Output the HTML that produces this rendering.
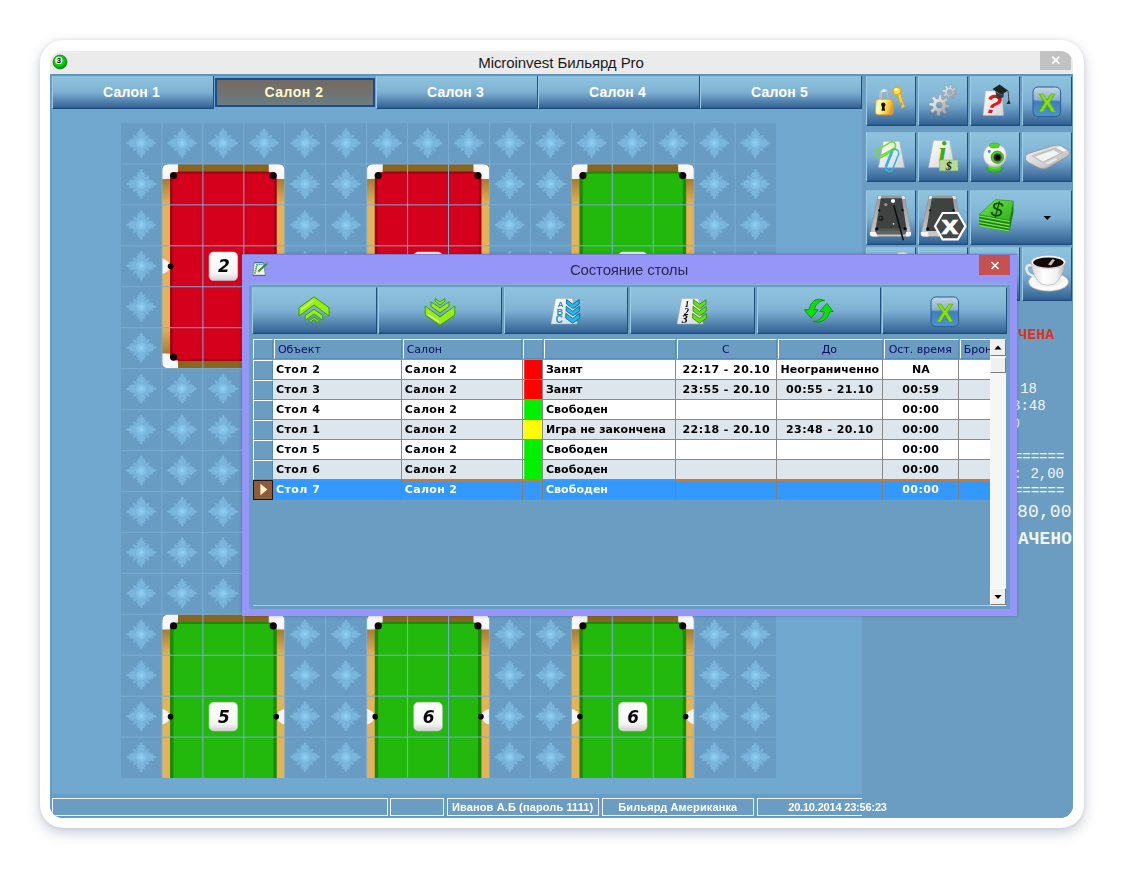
<!DOCTYPE html>
<html lang="ru"><head><meta charset="utf-8"><title>Microinvest Бильярд Pro</title>
<style>
*{box-sizing:border-box;margin:0;padding:0}
html,body{width:1124px;height:869px;background:#fff;overflow:hidden}
body{position:relative;font-family:"Liberation Sans",sans-serif}
#card{position:absolute;left:40px;top:40px;width:1044px;height:788px;background:#fff;border-radius:23px;box-shadow:0 5px 13px rgba(50,70,110,.27),0 0 4px rgba(50,70,110,.11)}
#shot{position:absolute;left:50px;top:51px;width:1023px;height:767px;border-radius:13px;overflow:hidden;background:linear-gradient(to bottom,#ebebeb 0,#ebebeb 23px,#70a8cf 23px)}
#in{position:absolute;left:-50px;top:-51px;width:1124px;height:869px}
.abs{position:absolute}
#tbar{left:50px;top:51px;width:1024px;height:23.2px;background:#ebebeb}
#title{left:361px;width:400px;top:53.5px;height:18px;text-align:center;font-size:15px;line-height:18px;color:#1a1a1a;letter-spacing:-0.07px}
#wclose{left:1040px;top:51px;width:31px;height:19px;background:#c2c2c2}
#strip{left:50px;top:74px;width:1024px;height:2.2px;background:#5d95bd}
#rpanel{left:862px;top:76px;width:212px;height:745px;background:#6a9dc1}
#ledge{left:50px;top:74px;width:2px;height:745px;background:#659dc6}
.tab{top:76px;height:33px;background:linear-gradient(to bottom,#8ec3de 0%,#86bad8 30%,#7db0d2 50%,#6c9fc6 62%,#5787b3 76%,#44749f 88%,#38689a 96%,#2a5a8c 100%);border-left:1px solid #9ccce6;border-right:1px solid #1f4f80;border-bottom:1.3px solid #1c4a7a;color:#fff;font-weight:bold;font-size:14px;text-align:center;line-height:33.2px;letter-spacing:.25px;padding-right:3px}
.tab.sel{background:linear-gradient(to bottom,#776a60 0%,#6f7474 60%,#6a7e82 100%);border:2px solid #1d4c8e;border-top-width:2px;color:#fff9cc;line-height:25.4px;padding-right:2px;letter-spacing:.5px}
.btn{background:linear-gradient(to bottom,#8ec3de 0%,#86bad8 30%,#7db0d2 50%,#6c9fc6 62%,#5787b3 76%,#44749f 88%,#38689a 96%,#2a5a8c 100%);border-left:1px solid #9ccce6;border-right:1.3px solid #1f4f80;border-bottom:1.5px solid #1c4a7a;border-top:1px solid #8abedb}
.btn svg{position:absolute;left:0;top:0;overflow:visible}
#sbar{left:50px;top:794px;width:812px;height:25px;background:#659dc6}
.sp{top:797.9px;height:18px;border:1.3px solid #f4f6f8;border-right-color:#e9eef3;background:#6a9dc1;color:#fff;font-weight:bold;font-size:11px;line-height:16.6px;text-align:center;white-space:nowrap;overflow:visible;letter-spacing:.12px}
.rc{font-family:"Liberation Mono",monospace;color:#f2f6fa;white-space:pre;text-align:right;right:60px}
#dlg{left:242.3px;top:254.4px;width:774.3px;height:361.2px;background:#9696f8;box-shadow:0 0 3px rgba(40,40,90,.35);border-top:1px solid #7c7cd0}
#dcont{left:249px;top:284.3px;width:760.5px;height:324.3px;background:#6b9dc2;border-top:1px solid #84b4d4}
#dtitle{left:429px;width:400px;top:259.6px;height:20px;text-align:center;font-size:15px;line-height:20px;color:#2a2a4c;letter-spacing:-0.18px}
#dclose{left:979px;top:255.2px;width:31px;height:19.6px;background:#c75050}
#gridbox{left:253px;top:339px;width:752.7px;height:266.5px;background:#6b9dc2;overflow:hidden;border-bottom:1px solid #a6d0e6}
.hc{position:absolute;top:0;height:20.4px;background:#6b9dc2;border-left:1.4px solid #fff;border-top:1.4px solid #fff;border-right:1px solid #5a8cb2;border-bottom:1px solid #5a8cb2;font-family:"DejaVu Sans","Liberation Sans",sans-serif;font-size:11px;line-height:19.6px;color:#0c0c64;white-space:nowrap;overflow:hidden;padding-left:3.2px;letter-spacing:0px}
.hc.c{text-align:center;padding-left:0;padding-right:2px}
.row{position:absolute;left:0;width:737px;height:20px}
.cell{position:absolute;top:0;height:20px;border-right:1px solid #8a8a8a;border-bottom:1px solid #8a8a8a;font-family:"DejaVu Sans","Liberation Sans",sans-serif;font-weight:bold;font-size:11px;line-height:20.2px;color:#000;white-space:nowrap;overflow:hidden;padding-left:2.6px;letter-spacing:0px}
.cell.c{text-align:center;padding-left:0}
.rh{position:absolute;top:0;left:0;width:20.4px;height:20px;background:#6b9dc2;border-left:1.4px solid #fff;border-top:1.4px solid #fff;border-right:1px solid #5a8cb2;border-bottom:1px solid #5a8cb2}
</style></head>
<body>
<div id="card"></div>
<div id="shot"><div id="in">
<div class="abs" id="rpanel"></div>
<div class="abs" id="strip"></div>
<div class="abs" id="ledge"></div>
<div class="abs" id="tbar"></div>
<svg class="abs" style="left:51.5px;top:53.5px" width="16" height="16" viewBox="0 0 16 16"><defs><radialGradient id="ball" cx="0.42" cy="0.38" r="0.62"><stop offset="0" stop-color="#30f030"/><stop offset="0.55" stop-color="#10d410"/><stop offset="1" stop-color="#069006"/></radialGradient></defs>
<circle cx="8" cy="8" r="7" fill="url(#ball)" stroke="#0a5a0a" stroke-width="0.6"/><circle cx="6.8" cy="6.4" r="3.6" fill="#f4fff4"/>
<text x="6.9" y="9.2" text-anchor="middle" font-family="Liberation Sans,sans-serif" font-weight="bold" font-size="7.6" fill="#000">3</text></svg>
<div class="abs" id="title">Microinvest Бильярд Pro</div>
<div class="abs" id="wclose"><svg width="31" height="19" viewBox="0 0 31 19"><path d="M12.3,5.6 L19.3,12.6 M19.3,5.6 L12.3,12.6" stroke="#fff" stroke-width="1.6"/></svg></div>
<div class="abs tab" style="left:52px;width:162px">Салон 1</div>
<div class="abs tab sel" style="left:214.6px;width:160.8px;top:77.6px;height:29.6px">Салон 2</div>
<div class="abs tab" style="left:376px;width:162px">Салон 3</div>
<div class="abs tab" style="left:538px;width:162px">Салон 4</div>
<div class="abs tab" style="left:700px;width:162px">Салон 5</div>
<svg id="grid" style="position:absolute;left:121.1px;top:123.1px" width="655.04" height="655.04" viewBox="0 0 655.04 655.04">
<defs>
<radialGradient id="sfc"><stop offset="0" stop-color="#9ad8f8"/><stop offset="0.6" stop-color="#86c4ea"/><stop offset="1" stop-color="#80bce2"/></radialGradient>
<filter id="sblur" x="0" y="0" width="100%" height="100%" filterUnits="userSpaceOnUse"><feGaussianBlur stdDeviation="0.45"/></filter>
<g id="sf">
<path id="arm" d="M0,-15.4 L1.5,-13.5 L1.5,-11.5 L3.8,-12.3 L3.2,-9.6 L5.2,-9.4 L3,-6 L-3,-6 L-5.2,-9.4 L-3.2,-9.6 L-3.8,-12.3 L-1.5,-11.5 L-1.5,-13.5 Z" fill="#7fbbe2" opacity="0.8"/>
<use href="#arm" transform="rotate(90)"/><use href="#arm" transform="rotate(180)"/><use href="#arm" transform="rotate(270)"/>
<path d="M0,-9.6 L3,-6.6 L8.6,-8.6 L6.6,-3 L9.6,0 L6.6,3 L8.6,8.6 L3,6.6 L0,9.6 L-3,6.6 L-8.6,8.6 L-6.6,3 L-9.6,0 L-6.6,-3 L-8.6,-8.6 L-3,-6.6 Z" fill="#7cb7df" opacity="0.8"/>
<circle r="5.4" fill="url(#sfc)" opacity="0.85"/>
</g>
<linearGradient id="woodS" x1="0" y1="0" x2="0" y2="1"><stop offset="0" stop-color="#8a6520"/><stop offset="0.07" stop-color="#a57a30"/><stop offset="0.2" stop-color="#e6b257"/><stop offset="0.8" stop-color="#e6b257"/><stop offset="0.93" stop-color="#a57a30"/><stop offset="1" stop-color="#8a6520"/></linearGradient>
<linearGradient id="pk" x1="0" y1="0" x2="1" y2="1"><stop offset="0" stop-color="#ffffff"/><stop offset="0.6" stop-color="#f4f4f4"/><stop offset="1" stop-color="#b8b8b8"/></linearGradient>
<linearGradient id="lbl" x1="0" y1="0" x2="0" y2="1"><stop offset="0" stop-color="#ffffff"/><stop offset="0.75" stop-color="#f6f6f6"/><stop offset="1" stop-color="#d0d0d0"/></linearGradient>

</defs>
<rect width="655.04" height="655.04" fill="#689cc2"/>
<g filter="url(#sblur)">
<use href="#sf" x="20.20" y="20.00"/>
<use href="#sf" x="61.14" y="20.00"/>
<use href="#sf" x="102.08" y="20.00"/>
<use href="#sf" x="143.02" y="20.00"/>
<use href="#sf" x="183.96" y="20.00"/>
<use href="#sf" x="224.90" y="20.00"/>
<use href="#sf" x="265.84" y="20.00"/>
<use href="#sf" x="306.78" y="20.00"/>
<use href="#sf" x="347.72" y="20.00"/>
<use href="#sf" x="388.66" y="20.00"/>
<use href="#sf" x="429.60" y="20.00"/>
<use href="#sf" x="470.54" y="20.00"/>
<use href="#sf" x="511.48" y="20.00"/>
<use href="#sf" x="552.42" y="20.00"/>
<use href="#sf" x="593.36" y="20.00"/>
<use href="#sf" x="634.30" y="20.00"/>
<use href="#sf" x="20.20" y="60.94"/>
<use href="#sf" x="61.14" y="60.94"/>
<use href="#sf" x="102.08" y="60.94"/>
<use href="#sf" x="143.02" y="60.94"/>
<use href="#sf" x="183.96" y="60.94"/>
<use href="#sf" x="224.90" y="60.94"/>
<use href="#sf" x="265.84" y="60.94"/>
<use href="#sf" x="306.78" y="60.94"/>
<use href="#sf" x="347.72" y="60.94"/>
<use href="#sf" x="388.66" y="60.94"/>
<use href="#sf" x="429.60" y="60.94"/>
<use href="#sf" x="470.54" y="60.94"/>
<use href="#sf" x="511.48" y="60.94"/>
<use href="#sf" x="552.42" y="60.94"/>
<use href="#sf" x="593.36" y="60.94"/>
<use href="#sf" x="634.30" y="60.94"/>
<use href="#sf" x="20.20" y="101.88"/>
<use href="#sf" x="61.14" y="101.88"/>
<use href="#sf" x="102.08" y="101.88"/>
<use href="#sf" x="143.02" y="101.88"/>
<use href="#sf" x="183.96" y="101.88"/>
<use href="#sf" x="224.90" y="101.88"/>
<use href="#sf" x="265.84" y="101.88"/>
<use href="#sf" x="306.78" y="101.88"/>
<use href="#sf" x="347.72" y="101.88"/>
<use href="#sf" x="388.66" y="101.88"/>
<use href="#sf" x="429.60" y="101.88"/>
<use href="#sf" x="470.54" y="101.88"/>
<use href="#sf" x="511.48" y="101.88"/>
<use href="#sf" x="552.42" y="101.88"/>
<use href="#sf" x="593.36" y="101.88"/>
<use href="#sf" x="634.30" y="101.88"/>
<use href="#sf" x="20.20" y="142.82"/>
<use href="#sf" x="61.14" y="142.82"/>
<use href="#sf" x="102.08" y="142.82"/>
<use href="#sf" x="143.02" y="142.82"/>
<use href="#sf" x="183.96" y="142.82"/>
<use href="#sf" x="224.90" y="142.82"/>
<use href="#sf" x="265.84" y="142.82"/>
<use href="#sf" x="306.78" y="142.82"/>
<use href="#sf" x="347.72" y="142.82"/>
<use href="#sf" x="388.66" y="142.82"/>
<use href="#sf" x="429.60" y="142.82"/>
<use href="#sf" x="470.54" y="142.82"/>
<use href="#sf" x="511.48" y="142.82"/>
<use href="#sf" x="552.42" y="142.82"/>
<use href="#sf" x="593.36" y="142.82"/>
<use href="#sf" x="634.30" y="142.82"/>
<use href="#sf" x="20.20" y="183.76"/>
<use href="#sf" x="61.14" y="183.76"/>
<use href="#sf" x="102.08" y="183.76"/>
<use href="#sf" x="143.02" y="183.76"/>
<use href="#sf" x="183.96" y="183.76"/>
<use href="#sf" x="224.90" y="183.76"/>
<use href="#sf" x="265.84" y="183.76"/>
<use href="#sf" x="306.78" y="183.76"/>
<use href="#sf" x="347.72" y="183.76"/>
<use href="#sf" x="388.66" y="183.76"/>
<use href="#sf" x="429.60" y="183.76"/>
<use href="#sf" x="470.54" y="183.76"/>
<use href="#sf" x="511.48" y="183.76"/>
<use href="#sf" x="552.42" y="183.76"/>
<use href="#sf" x="593.36" y="183.76"/>
<use href="#sf" x="634.30" y="183.76"/>
<use href="#sf" x="20.20" y="224.70"/>
<use href="#sf" x="61.14" y="224.70"/>
<use href="#sf" x="102.08" y="224.70"/>
<use href="#sf" x="143.02" y="224.70"/>
<use href="#sf" x="183.96" y="224.70"/>
<use href="#sf" x="224.90" y="224.70"/>
<use href="#sf" x="265.84" y="224.70"/>
<use href="#sf" x="306.78" y="224.70"/>
<use href="#sf" x="347.72" y="224.70"/>
<use href="#sf" x="388.66" y="224.70"/>
<use href="#sf" x="429.60" y="224.70"/>
<use href="#sf" x="470.54" y="224.70"/>
<use href="#sf" x="511.48" y="224.70"/>
<use href="#sf" x="552.42" y="224.70"/>
<use href="#sf" x="593.36" y="224.70"/>
<use href="#sf" x="634.30" y="224.70"/>
<use href="#sf" x="20.20" y="265.64"/>
<use href="#sf" x="61.14" y="265.64"/>
<use href="#sf" x="102.08" y="265.64"/>
<use href="#sf" x="143.02" y="265.64"/>
<use href="#sf" x="183.96" y="265.64"/>
<use href="#sf" x="224.90" y="265.64"/>
<use href="#sf" x="265.84" y="265.64"/>
<use href="#sf" x="306.78" y="265.64"/>
<use href="#sf" x="347.72" y="265.64"/>
<use href="#sf" x="388.66" y="265.64"/>
<use href="#sf" x="429.60" y="265.64"/>
<use href="#sf" x="470.54" y="265.64"/>
<use href="#sf" x="511.48" y="265.64"/>
<use href="#sf" x="552.42" y="265.64"/>
<use href="#sf" x="593.36" y="265.64"/>
<use href="#sf" x="634.30" y="265.64"/>
<use href="#sf" x="20.20" y="306.58"/>
<use href="#sf" x="61.14" y="306.58"/>
<use href="#sf" x="102.08" y="306.58"/>
<use href="#sf" x="143.02" y="306.58"/>
<use href="#sf" x="183.96" y="306.58"/>
<use href="#sf" x="224.90" y="306.58"/>
<use href="#sf" x="265.84" y="306.58"/>
<use href="#sf" x="306.78" y="306.58"/>
<use href="#sf" x="347.72" y="306.58"/>
<use href="#sf" x="388.66" y="306.58"/>
<use href="#sf" x="429.60" y="306.58"/>
<use href="#sf" x="470.54" y="306.58"/>
<use href="#sf" x="511.48" y="306.58"/>
<use href="#sf" x="552.42" y="306.58"/>
<use href="#sf" x="593.36" y="306.58"/>
<use href="#sf" x="634.30" y="306.58"/>
<use href="#sf" x="20.20" y="347.52"/>
<use href="#sf" x="61.14" y="347.52"/>
<use href="#sf" x="102.08" y="347.52"/>
<use href="#sf" x="143.02" y="347.52"/>
<use href="#sf" x="183.96" y="347.52"/>
<use href="#sf" x="224.90" y="347.52"/>
<use href="#sf" x="265.84" y="347.52"/>
<use href="#sf" x="306.78" y="347.52"/>
<use href="#sf" x="347.72" y="347.52"/>
<use href="#sf" x="388.66" y="347.52"/>
<use href="#sf" x="429.60" y="347.52"/>
<use href="#sf" x="470.54" y="347.52"/>
<use href="#sf" x="511.48" y="347.52"/>
<use href="#sf" x="552.42" y="347.52"/>
<use href="#sf" x="593.36" y="347.52"/>
<use href="#sf" x="634.30" y="347.52"/>
<use href="#sf" x="20.20" y="388.46"/>
<use href="#sf" x="61.14" y="388.46"/>
<use href="#sf" x="102.08" y="388.46"/>
<use href="#sf" x="143.02" y="388.46"/>
<use href="#sf" x="183.96" y="388.46"/>
<use href="#sf" x="224.90" y="388.46"/>
<use href="#sf" x="265.84" y="388.46"/>
<use href="#sf" x="306.78" y="388.46"/>
<use href="#sf" x="347.72" y="388.46"/>
<use href="#sf" x="388.66" y="388.46"/>
<use href="#sf" x="429.60" y="388.46"/>
<use href="#sf" x="470.54" y="388.46"/>
<use href="#sf" x="511.48" y="388.46"/>
<use href="#sf" x="552.42" y="388.46"/>
<use href="#sf" x="593.36" y="388.46"/>
<use href="#sf" x="634.30" y="388.46"/>
<use href="#sf" x="20.20" y="429.40"/>
<use href="#sf" x="61.14" y="429.40"/>
<use href="#sf" x="102.08" y="429.40"/>
<use href="#sf" x="143.02" y="429.40"/>
<use href="#sf" x="183.96" y="429.40"/>
<use href="#sf" x="224.90" y="429.40"/>
<use href="#sf" x="265.84" y="429.40"/>
<use href="#sf" x="306.78" y="429.40"/>
<use href="#sf" x="347.72" y="429.40"/>
<use href="#sf" x="388.66" y="429.40"/>
<use href="#sf" x="429.60" y="429.40"/>
<use href="#sf" x="470.54" y="429.40"/>
<use href="#sf" x="511.48" y="429.40"/>
<use href="#sf" x="552.42" y="429.40"/>
<use href="#sf" x="593.36" y="429.40"/>
<use href="#sf" x="634.30" y="429.40"/>
<use href="#sf" x="20.20" y="470.34"/>
<use href="#sf" x="61.14" y="470.34"/>
<use href="#sf" x="102.08" y="470.34"/>
<use href="#sf" x="143.02" y="470.34"/>
<use href="#sf" x="183.96" y="470.34"/>
<use href="#sf" x="224.90" y="470.34"/>
<use href="#sf" x="265.84" y="470.34"/>
<use href="#sf" x="306.78" y="470.34"/>
<use href="#sf" x="347.72" y="470.34"/>
<use href="#sf" x="388.66" y="470.34"/>
<use href="#sf" x="429.60" y="470.34"/>
<use href="#sf" x="470.54" y="470.34"/>
<use href="#sf" x="511.48" y="470.34"/>
<use href="#sf" x="552.42" y="470.34"/>
<use href="#sf" x="593.36" y="470.34"/>
<use href="#sf" x="634.30" y="470.34"/>
<use href="#sf" x="20.20" y="511.28"/>
<use href="#sf" x="61.14" y="511.28"/>
<use href="#sf" x="102.08" y="511.28"/>
<use href="#sf" x="143.02" y="511.28"/>
<use href="#sf" x="183.96" y="511.28"/>
<use href="#sf" x="224.90" y="511.28"/>
<use href="#sf" x="265.84" y="511.28"/>
<use href="#sf" x="306.78" y="511.28"/>
<use href="#sf" x="347.72" y="511.28"/>
<use href="#sf" x="388.66" y="511.28"/>
<use href="#sf" x="429.60" y="511.28"/>
<use href="#sf" x="470.54" y="511.28"/>
<use href="#sf" x="511.48" y="511.28"/>
<use href="#sf" x="552.42" y="511.28"/>
<use href="#sf" x="593.36" y="511.28"/>
<use href="#sf" x="634.30" y="511.28"/>
<use href="#sf" x="20.20" y="552.22"/>
<use href="#sf" x="61.14" y="552.22"/>
<use href="#sf" x="102.08" y="552.22"/>
<use href="#sf" x="143.02" y="552.22"/>
<use href="#sf" x="183.96" y="552.22"/>
<use href="#sf" x="224.90" y="552.22"/>
<use href="#sf" x="265.84" y="552.22"/>
<use href="#sf" x="306.78" y="552.22"/>
<use href="#sf" x="347.72" y="552.22"/>
<use href="#sf" x="388.66" y="552.22"/>
<use href="#sf" x="429.60" y="552.22"/>
<use href="#sf" x="470.54" y="552.22"/>
<use href="#sf" x="511.48" y="552.22"/>
<use href="#sf" x="552.42" y="552.22"/>
<use href="#sf" x="593.36" y="552.22"/>
<use href="#sf" x="634.30" y="552.22"/>
<use href="#sf" x="20.20" y="593.16"/>
<use href="#sf" x="61.14" y="593.16"/>
<use href="#sf" x="102.08" y="593.16"/>
<use href="#sf" x="143.02" y="593.16"/>
<use href="#sf" x="183.96" y="593.16"/>
<use href="#sf" x="224.90" y="593.16"/>
<use href="#sf" x="265.84" y="593.16"/>
<use href="#sf" x="306.78" y="593.16"/>
<use href="#sf" x="347.72" y="593.16"/>
<use href="#sf" x="388.66" y="593.16"/>
<use href="#sf" x="429.60" y="593.16"/>
<use href="#sf" x="470.54" y="593.16"/>
<use href="#sf" x="511.48" y="593.16"/>
<use href="#sf" x="552.42" y="593.16"/>
<use href="#sf" x="593.36" y="593.16"/>
<use href="#sf" x="634.30" y="593.16"/>
<use href="#sf" x="20.20" y="634.10"/>
<use href="#sf" x="61.14" y="634.10"/>
<use href="#sf" x="102.08" y="634.10"/>
<use href="#sf" x="143.02" y="634.10"/>
<use href="#sf" x="183.96" y="634.10"/>
<use href="#sf" x="224.90" y="634.10"/>
<use href="#sf" x="265.84" y="634.10"/>
<use href="#sf" x="306.78" y="634.10"/>
<use href="#sf" x="347.72" y="634.10"/>
<use href="#sf" x="388.66" y="634.10"/>
<use href="#sf" x="429.60" y="634.10"/>
<use href="#sf" x="470.54" y="634.10"/>
<use href="#sf" x="511.48" y="634.10"/>
<use href="#sf" x="552.42" y="634.10"/>
<use href="#sf" x="593.36" y="634.10"/>
<use href="#sf" x="634.30" y="634.10"/>
</g>
<g transform="translate(41.04,41.04)"><rect x="0" y="0" width="122.72" height="204.50" rx="5" fill="url(#woodS)"/><rect x="8" y="0" width="106.72" height="8" fill="#8a6520"/><rect x="8" y="196.50" width="106.72" height="8" fill="#8a6520"/><rect x="8" y="7.5" width="106.72" height="189.50" fill="#a30018"/><rect x="10.6" y="9.6" width="101.52" height="185.30" fill="#d4001c"/><g transform="translate(0.00,0.00) scale(1,1)"><path d="M0,15 L0,7 Q0,0 7,0 L16,0 L16,8 Q8,8 8,15 Z" fill="url(#pk)"/><circle cx="11.5" cy="11.5" r="3.6" fill="#100404"/></g><g transform="translate(122.72,0.00) scale(-1,1)"><path d="M0,15 L0,7 Q0,0 7,0 L16,0 L16,8 Q8,8 8,15 Z" fill="url(#pk)"/><circle cx="11.5" cy="11.5" r="3.6" fill="#100404"/></g><g transform="translate(0.00,204.50) scale(1,-1)"><path d="M0,15 L0,7 Q0,0 7,0 L16,0 L16,8 Q8,8 8,15 Z" fill="url(#pk)"/><circle cx="11.5" cy="11.5" r="3.6" fill="#100404"/></g><g transform="translate(122.72,204.50) scale(-1,-1)"><path d="M0,15 L0,7 Q0,0 7,0 L16,0 L16,8 Q8,8 8,15 Z" fill="url(#pk)"/><circle cx="11.5" cy="11.5" r="3.6" fill="#100404"/></g><g transform="translate(0.00,102.25) scale(1,1)"><path d="M0,-7.8 Q6.6,-6 8.8,0 Q6.6,6 0,7.8 Z" fill="#f4f4f4"/><circle cx="8.5" cy="0" r="2.8" fill="#080808"/></g><g transform="translate(122.72,102.25) scale(-1,1)"><path d="M0,-7.8 Q6.6,-6 8.8,0 Q6.6,6 0,7.8 Z" fill="#f4f4f4"/><circle cx="8.5" cy="0" r="2.8" fill="#080808"/></g></g>
<g transform="translate(245.74,41.04)"><rect x="0" y="0" width="122.72" height="204.50" rx="5" fill="url(#woodS)"/><rect x="8" y="0" width="106.72" height="8" fill="#8a6520"/><rect x="8" y="196.50" width="106.72" height="8" fill="#8a6520"/><rect x="8" y="7.5" width="106.72" height="189.50" fill="#a30018"/><rect x="10.6" y="9.6" width="101.52" height="185.30" fill="#d4001c"/><g transform="translate(0.00,0.00) scale(1,1)"><path d="M0,15 L0,7 Q0,0 7,0 L16,0 L16,8 Q8,8 8,15 Z" fill="url(#pk)"/><circle cx="11.5" cy="11.5" r="3.6" fill="#100404"/></g><g transform="translate(122.72,0.00) scale(-1,1)"><path d="M0,15 L0,7 Q0,0 7,0 L16,0 L16,8 Q8,8 8,15 Z" fill="url(#pk)"/><circle cx="11.5" cy="11.5" r="3.6" fill="#100404"/></g><g transform="translate(0.00,204.50) scale(1,-1)"><path d="M0,15 L0,7 Q0,0 7,0 L16,0 L16,8 Q8,8 8,15 Z" fill="url(#pk)"/><circle cx="11.5" cy="11.5" r="3.6" fill="#100404"/></g><g transform="translate(122.72,204.50) scale(-1,-1)"><path d="M0,15 L0,7 Q0,0 7,0 L16,0 L16,8 Q8,8 8,15 Z" fill="url(#pk)"/><circle cx="11.5" cy="11.5" r="3.6" fill="#100404"/></g><g transform="translate(0.00,102.25) scale(1,1)"><path d="M0,-7.8 Q6.6,-6 8.8,0 Q6.6,6 0,7.8 Z" fill="#f4f4f4"/><circle cx="8.5" cy="0" r="2.8" fill="#080808"/></g><g transform="translate(122.72,102.25) scale(-1,1)"><path d="M0,-7.8 Q6.6,-6 8.8,0 Q6.6,6 0,7.8 Z" fill="#f4f4f4"/><circle cx="8.5" cy="0" r="2.8" fill="#080808"/></g></g>
<g transform="translate(450.44,41.04)"><rect x="0" y="0" width="122.72" height="204.50" rx="5" fill="url(#woodS)"/><rect x="8" y="0" width="106.72" height="8" fill="#8a6520"/><rect x="8" y="196.50" width="106.72" height="8" fill="#8a6520"/><rect x="8" y="7.5" width="106.72" height="189.50" fill="#168c08"/><rect x="11.4" y="9.6" width="99.92" height="185.30" fill="#22b80c"/><g transform="translate(0.00,0.00) scale(1,1)"><path d="M0,15 L0,7 Q0,0 7,0 L16,0 L16,8 Q8,8 8,15 Z" fill="url(#pk)"/><circle cx="11.5" cy="11.5" r="3.6" fill="#100404"/></g><g transform="translate(122.72,0.00) scale(-1,1)"><path d="M0,15 L0,7 Q0,0 7,0 L16,0 L16,8 Q8,8 8,15 Z" fill="url(#pk)"/><circle cx="11.5" cy="11.5" r="3.6" fill="#100404"/></g><g transform="translate(0.00,204.50) scale(1,-1)"><path d="M0,15 L0,7 Q0,0 7,0 L16,0 L16,8 Q8,8 8,15 Z" fill="url(#pk)"/><circle cx="11.5" cy="11.5" r="3.6" fill="#100404"/></g><g transform="translate(122.72,204.50) scale(-1,-1)"><path d="M0,15 L0,7 Q0,0 7,0 L16,0 L16,8 Q8,8 8,15 Z" fill="url(#pk)"/><circle cx="11.5" cy="11.5" r="3.6" fill="#100404"/></g><g transform="translate(0.00,102.25) scale(1,1)"><path d="M0,-7.8 Q6.6,-6 8.8,0 Q6.6,6 0,7.8 Z" fill="#f4f4f4"/><circle cx="8.5" cy="0" r="2.8" fill="#080808"/></g><g transform="translate(122.72,102.25) scale(-1,1)"><path d="M0,-7.8 Q6.6,-6 8.8,0 Q6.6,6 0,7.8 Z" fill="#f4f4f4"/><circle cx="8.5" cy="0" r="2.8" fill="#080808"/></g></g>
<g transform="translate(41.04,491.38)"><rect x="0" y="0" width="122.72" height="204.50" rx="5" fill="url(#woodS)"/><rect x="8" y="0" width="106.72" height="8" fill="#8a6520"/><rect x="8" y="196.50" width="106.72" height="8" fill="#8a6520"/><rect x="8" y="7.5" width="106.72" height="189.50" fill="#168c08"/><rect x="11.4" y="9.6" width="99.92" height="185.30" fill="#22b80c"/><g transform="translate(0.00,0.00) scale(1,1)"><path d="M0,15 L0,7 Q0,0 7,0 L16,0 L16,8 Q8,8 8,15 Z" fill="url(#pk)"/><circle cx="11.5" cy="11.5" r="3.6" fill="#100404"/></g><g transform="translate(122.72,0.00) scale(-1,1)"><path d="M0,15 L0,7 Q0,0 7,0 L16,0 L16,8 Q8,8 8,15 Z" fill="url(#pk)"/><circle cx="11.5" cy="11.5" r="3.6" fill="#100404"/></g><g transform="translate(0.00,204.50) scale(1,-1)"><path d="M0,15 L0,7 Q0,0 7,0 L16,0 L16,8 Q8,8 8,15 Z" fill="url(#pk)"/><circle cx="11.5" cy="11.5" r="3.6" fill="#100404"/></g><g transform="translate(122.72,204.50) scale(-1,-1)"><path d="M0,15 L0,7 Q0,0 7,0 L16,0 L16,8 Q8,8 8,15 Z" fill="url(#pk)"/><circle cx="11.5" cy="11.5" r="3.6" fill="#100404"/></g><g transform="translate(0.00,102.25) scale(1,1)"><path d="M0,-7.8 Q6.6,-6 8.8,0 Q6.6,6 0,7.8 Z" fill="#f4f4f4"/><circle cx="8.5" cy="0" r="2.8" fill="#080808"/></g><g transform="translate(122.72,102.25) scale(-1,1)"><path d="M0,-7.8 Q6.6,-6 8.8,0 Q6.6,6 0,7.8 Z" fill="#f4f4f4"/><circle cx="8.5" cy="0" r="2.8" fill="#080808"/></g></g>
<g transform="translate(245.74,491.38)"><rect x="0" y="0" width="122.72" height="204.50" rx="5" fill="url(#woodS)"/><rect x="8" y="0" width="106.72" height="8" fill="#8a6520"/><rect x="8" y="196.50" width="106.72" height="8" fill="#8a6520"/><rect x="8" y="7.5" width="106.72" height="189.50" fill="#168c08"/><rect x="11.4" y="9.6" width="99.92" height="185.30" fill="#22b80c"/><g transform="translate(0.00,0.00) scale(1,1)"><path d="M0,15 L0,7 Q0,0 7,0 L16,0 L16,8 Q8,8 8,15 Z" fill="url(#pk)"/><circle cx="11.5" cy="11.5" r="3.6" fill="#100404"/></g><g transform="translate(122.72,0.00) scale(-1,1)"><path d="M0,15 L0,7 Q0,0 7,0 L16,0 L16,8 Q8,8 8,15 Z" fill="url(#pk)"/><circle cx="11.5" cy="11.5" r="3.6" fill="#100404"/></g><g transform="translate(0.00,204.50) scale(1,-1)"><path d="M0,15 L0,7 Q0,0 7,0 L16,0 L16,8 Q8,8 8,15 Z" fill="url(#pk)"/><circle cx="11.5" cy="11.5" r="3.6" fill="#100404"/></g><g transform="translate(122.72,204.50) scale(-1,-1)"><path d="M0,15 L0,7 Q0,0 7,0 L16,0 L16,8 Q8,8 8,15 Z" fill="url(#pk)"/><circle cx="11.5" cy="11.5" r="3.6" fill="#100404"/></g><g transform="translate(0.00,102.25) scale(1,1)"><path d="M0,-7.8 Q6.6,-6 8.8,0 Q6.6,6 0,7.8 Z" fill="#f4f4f4"/><circle cx="8.5" cy="0" r="2.8" fill="#080808"/></g><g transform="translate(122.72,102.25) scale(-1,1)"><path d="M0,-7.8 Q6.6,-6 8.8,0 Q6.6,6 0,7.8 Z" fill="#f4f4f4"/><circle cx="8.5" cy="0" r="2.8" fill="#080808"/></g></g>
<g transform="translate(450.44,491.38)"><rect x="0" y="0" width="122.72" height="204.50" rx="5" fill="url(#woodS)"/><rect x="8" y="0" width="106.72" height="8" fill="#8a6520"/><rect x="8" y="196.50" width="106.72" height="8" fill="#8a6520"/><rect x="8" y="7.5" width="106.72" height="189.50" fill="#168c08"/><rect x="11.4" y="9.6" width="99.92" height="185.30" fill="#22b80c"/><g transform="translate(0.00,0.00) scale(1,1)"><path d="M0,15 L0,7 Q0,0 7,0 L16,0 L16,8 Q8,8 8,15 Z" fill="url(#pk)"/><circle cx="11.5" cy="11.5" r="3.6" fill="#100404"/></g><g transform="translate(122.72,0.00) scale(-1,1)"><path d="M0,15 L0,7 Q0,0 7,0 L16,0 L16,8 Q8,8 8,15 Z" fill="url(#pk)"/><circle cx="11.5" cy="11.5" r="3.6" fill="#100404"/></g><g transform="translate(0.00,204.50) scale(1,-1)"><path d="M0,15 L0,7 Q0,0 7,0 L16,0 L16,8 Q8,8 8,15 Z" fill="url(#pk)"/><circle cx="11.5" cy="11.5" r="3.6" fill="#100404"/></g><g transform="translate(122.72,204.50) scale(-1,-1)"><path d="M0,15 L0,7 Q0,0 7,0 L16,0 L16,8 Q8,8 8,15 Z" fill="url(#pk)"/><circle cx="11.5" cy="11.5" r="3.6" fill="#100404"/></g><g transform="translate(0.00,102.25) scale(1,1)"><path d="M0,-7.8 Q6.6,-6 8.8,0 Q6.6,6 0,7.8 Z" fill="#f4f4f4"/><circle cx="8.5" cy="0" r="2.8" fill="#080808"/></g><g transform="translate(122.72,102.25) scale(-1,1)"><path d="M0,-7.8 Q6.6,-6 8.8,0 Q6.6,6 0,7.8 Z" fill="#f4f4f4"/><circle cx="8.5" cy="0" r="2.8" fill="#080808"/></g></g>
<rect x="40.44" y="0" width="1" height="655.04" fill="#7aaed4"/>
<rect x="0" y="40.44" width="655.04" height="1" fill="#7aaed4"/>
<rect x="81.38" y="0" width="1" height="655.04" fill="#7aaed4"/>
<rect x="0" y="81.38" width="655.04" height="1" fill="#7aaed4"/>
<rect x="122.32" y="0" width="1" height="655.04" fill="#7aaed4"/>
<rect x="0" y="122.32" width="655.04" height="1" fill="#7aaed4"/>
<rect x="163.26" y="0" width="1" height="655.04" fill="#7aaed4"/>
<rect x="0" y="163.26" width="655.04" height="1" fill="#7aaed4"/>
<rect x="204.20" y="0" width="1" height="655.04" fill="#7aaed4"/>
<rect x="0" y="204.20" width="655.04" height="1" fill="#7aaed4"/>
<rect x="245.14" y="0" width="1" height="655.04" fill="#7aaed4"/>
<rect x="0" y="245.14" width="655.04" height="1" fill="#7aaed4"/>
<rect x="286.08" y="0" width="1" height="655.04" fill="#7aaed4"/>
<rect x="0" y="286.08" width="655.04" height="1" fill="#7aaed4"/>
<rect x="327.02" y="0" width="1" height="655.04" fill="#7aaed4"/>
<rect x="0" y="327.02" width="655.04" height="1" fill="#7aaed4"/>
<rect x="367.96" y="0" width="1" height="655.04" fill="#7aaed4"/>
<rect x="0" y="367.96" width="655.04" height="1" fill="#7aaed4"/>
<rect x="408.90" y="0" width="1" height="655.04" fill="#7aaed4"/>
<rect x="0" y="408.90" width="655.04" height="1" fill="#7aaed4"/>
<rect x="449.84" y="0" width="1" height="655.04" fill="#7aaed4"/>
<rect x="0" y="449.84" width="655.04" height="1" fill="#7aaed4"/>
<rect x="490.78" y="0" width="1" height="655.04" fill="#7aaed4"/>
<rect x="0" y="490.78" width="655.04" height="1" fill="#7aaed4"/>
<rect x="531.72" y="0" width="1" height="655.04" fill="#7aaed4"/>
<rect x="0" y="531.72" width="655.04" height="1" fill="#7aaed4"/>
<rect x="572.66" y="0" width="1" height="655.04" fill="#7aaed4"/>
<rect x="0" y="572.66" width="655.04" height="1" fill="#7aaed4"/>
<rect x="613.60" y="0" width="1" height="655.04" fill="#7aaed4"/>
<rect x="0" y="613.60" width="655.04" height="1" fill="#7aaed4"/>
<g transform="translate(102.35,143.29)"><rect x="-14.3" y="-14.3" width="28.6" height="28.6" rx="4.5" fill="url(#lbl)" stroke="#c8c8c8" stroke-width="0.6"/><text x="0.5" y="6.2" text-anchor="middle" font-family="DejaVu Sans, Liberation Sans, sans-serif" font-weight="bold" font-style="italic" font-size="17" fill="#0a0a0a">2</text></g>
<g transform="translate(307.05,143.29)"><rect x="-14.3" y="-14.3" width="28.6" height="28.6" rx="4.5" fill="url(#lbl)" stroke="#c8c8c8" stroke-width="0.6"/><text x="0.5" y="6.2" text-anchor="middle" font-family="DejaVu Sans, Liberation Sans, sans-serif" font-weight="bold" font-style="italic" font-size="17" fill="#0a0a0a">3</text></g>
<g transform="translate(511.75,143.29)"><rect x="-14.3" y="-14.3" width="28.6" height="28.6" rx="4.5" fill="url(#lbl)" stroke="#c8c8c8" stroke-width="0.6"/><text x="0.5" y="6.2" text-anchor="middle" font-family="DejaVu Sans, Liberation Sans, sans-serif" font-weight="bold" font-style="italic" font-size="17" fill="#0a0a0a">4</text></g>
<g transform="translate(102.35,593.63)"><rect x="-14.3" y="-14.3" width="28.6" height="28.6" rx="4.5" fill="url(#lbl)" stroke="#c8c8c8" stroke-width="0.6"/><text x="0.5" y="6.2" text-anchor="middle" font-family="DejaVu Sans, Liberation Sans, sans-serif" font-weight="bold" font-style="italic" font-size="17" fill="#0a0a0a">5</text></g>
<g transform="translate(307.05,593.63)"><rect x="-14.3" y="-14.3" width="28.6" height="28.6" rx="4.5" fill="url(#lbl)" stroke="#c8c8c8" stroke-width="0.6"/><text x="0.5" y="6.2" text-anchor="middle" font-family="DejaVu Sans, Liberation Sans, sans-serif" font-weight="bold" font-style="italic" font-size="17" fill="#0a0a0a">6</text></g>
<g transform="translate(511.75,593.63)"><rect x="-14.3" y="-14.3" width="28.6" height="28.6" rx="4.5" fill="url(#lbl)" stroke="#c8c8c8" stroke-width="0.6"/><text x="0.5" y="6.2" text-anchor="middle" font-family="DejaVu Sans, Liberation Sans, sans-serif" font-weight="bold" font-style="italic" font-size="17" fill="#0a0a0a">6</text></g>
</svg>
<div class="abs btn" style="left:866px;top:76.1px;width:50px;height:49.6px"><div class="abs" style="left:-1px;top:-1px"><svg width="50" height="50" viewBox="0 0 50 50">
<defs><linearGradient id="lkb" x1="0" y1="0" x2="1" y2="0.25"><stop offset="0" stop-color="#f2b636"/><stop offset="0.22" stop-color="#fffbd0"/><stop offset="0.5" stop-color="#fff47c"/><stop offset="0.8" stop-color="#f6c838"/><stop offset="1" stop-color="#e49a24"/></linearGradient>
<linearGradient id="lks" x1="0" y1="0" x2="1" y2="0"><stop offset="0" stop-color="#b8b8bc"/><stop offset="0.4" stop-color="#f4f4f6"/><stop offset="1" stop-color="#a8a8ac"/></linearGradient></defs>
<path d="M14.2,24.5 V19 a4.3,4.6 0 0 1 8.6,0 V24.5" fill="none" stroke="url(#lks)" stroke-width="2.7"/>
<rect x="9.4" y="23.2" width="17.8" height="15.6" rx="3" fill="url(#lkb)" stroke="#dc9a2c" stroke-width="0.9"/>
<circle cx="17.3" cy="28.8" r="2.2" fill="#111"/><path d="M16.3,29.4 L15.5,34.8 H19.1 L18.3,29.4 Z" fill="#111"/>
<circle cx="30.9" cy="15" r="3.9" fill="#fbe630" stroke="#e8a428" stroke-width="1.5"/>
<circle cx="30" cy="13.6" r="1.5" fill="#fdf8c8"/>
<path d="M31.4,18 L34.4,17 L38.6,30.4 L36.8,32 L35.4,31.4 L35.2,29.2 L36.4,28.4 L35.4,26.6 L34,27 Z" fill="#f8d42c" stroke="#e09a28" stroke-width="0.7"/>
</svg></div></div>
<div class="abs btn" style="left:918px;top:76.1px;width:50px;height:49.6px"><div class="abs" style="left:-1px;top:-1px"><svg width="50" height="50" viewBox="0 0 50 50">
<defs><linearGradient id="grg" x1="0" y1="0" x2="1" y2="1"><stop offset="0" stop-color="#ffffff"/><stop offset="0.45" stop-color="#d4d4d4"/><stop offset="1" stop-color="#8a8a8a"/></linearGradient></defs>
<path d="M36.20,15.83 L38.79,16.37 L38.36,18.50 L35.76,17.98 L34.94,19.20 L36.39,21.42 L34.58,22.62 L33.11,20.42 L31.67,20.70 L31.13,23.29 L29.00,22.86 L29.52,20.26 L28.30,19.44 L26.08,20.89 L24.88,19.08 L27.08,17.61 L26.80,16.17 L24.21,15.63 L24.64,13.50 L27.24,14.02 L28.06,12.80 L26.61,10.58 L28.42,9.38 L29.89,11.58 L31.33,11.30 L31.87,8.71 L34.00,9.14 L33.48,11.74 L34.70,12.56 L36.92,11.11 L38.12,12.92 L35.92,14.39 Z M33.90,16.00 a2.4,2.4 0 1 0 -4.8,0 a2.4,2.4 0 1 0 4.8,0 Z" fill="url(#grg)" stroke="#909090" stroke-width="0.5" fill-rule="evenodd"/>
<path d="M28.04,28.28 L31.69,28.69 L31.38,31.77 L27.72,31.44 L26.71,33.31 L29.01,36.18 L26.61,38.14 L24.26,35.32 L22.22,35.94 L21.81,39.59 L18.73,39.28 L19.06,35.62 L17.19,34.61 L14.32,36.91 L12.36,34.51 L15.18,32.16 L14.56,30.12 L10.91,29.71 L11.22,26.63 L14.88,26.96 L15.89,25.09 L13.59,22.22 L15.99,20.26 L18.34,23.08 L20.38,22.46 L20.79,18.81 L23.87,19.12 L23.54,22.78 L25.41,23.79 L28.28,21.49 L30.24,23.89 L27.42,26.24 Z M24.30,29.20 a3.0,3.0 0 1 0 -6.0,0 a3.0,3.0 0 1 0 6.0,0 Z" fill="url(#grg)" stroke="#8a8a8a" stroke-width="0.5" fill-rule="evenodd"/>
</svg></div></div>
<div class="abs btn" style="left:970px;top:76.1px;width:50px;height:49.6px"><div class="abs" style="left:-1px;top:-1px"><svg width="50" height="50" viewBox="0 0 50 50">
<defs><linearGradient id="pap" x1="0" y1="0" x2="1" y2="1"><stop offset="0" stop-color="#ffffff"/><stop offset="1" stop-color="#d4d4d8"/></linearGradient></defs>
<path d="M15.5,15 H32 L33.5,39.5 H13 Z" fill="url(#pap)" stroke="#b0b0b0" stroke-width="0.5"/>
<text x="23.6" y="37.5" text-anchor="middle" font-family="Liberation Sans,sans-serif" font-weight="bold" font-style="italic" font-size="27" fill="#e01818" transform="rotate(8 24 28)">?</text>
<path d="M22.5,13 L29.5,8.5 L38,14.5 L31,19 Z" fill="#222"/>
<path d="M25.5,15.5 L26.5,21.5 Q30,24 33.5,21 L33.8,16.5 L31,19 Z" fill="#3a3a3a"/>
<path d="M37.5,14.5 L38.5,24 L36.6,28 H40.5 L39.3,24 L38.3,14.8 Z" fill="#2a2a2a"/>
</svg></div></div>
<div class="abs btn" style="left:1022px;top:76.1px;width:50.3px;height:49.6px"><div class="abs" style="left:10.4px;top:9.6px"><svg width="50" height="50" viewBox="0 0 50 50">
<defs><linearGradient id="xba" x1="0" y1="0" x2="0" y2="1"><stop offset="0" stop-color="#c4d6e6"/><stop offset="0.42" stop-color="#8eb2d4"/><stop offset="0.5" stop-color="#3f7ebc"/><stop offset="1" stop-color="#4d92d0"/></linearGradient></defs>
<rect x="0" y="0" width="27.6" height="29.6" rx="5" fill="url(#xba)" stroke="#2c5c96" stroke-width="1"/>
<text x="13.9" y="24.6" text-anchor="middle" font-family="Liberation Sans,sans-serif" font-weight="bold" font-size="25.5" fill="#86e40a" stroke="#5cac04" stroke-width="0.7">X</text>
</svg></div></div>
<div class="abs btn" style="left:866px;top:132.1px;width:50px;height:49.6px"><div class="abs" style="left:-1px;top:-1px"><svg width="50" height="50" viewBox="0 0 50 50">
<path d="M17.5,9.5 H33.5 L38.5,35.5 H12.5 Z" fill="url(#pap)" stroke="#b4b4b4" stroke-width="0.5"/>
<g fill="none" stroke-linecap="round">
<path d="M14,25 L27.5,17.5 a3.6,3.6 0 0 0 -3.4,-6.3 L11.5,18.5 a4.3,4.3 0 0 0 4.2,7.6 L29,18" stroke="#78e018" stroke-width="1.5" transform="translate(0.5,-1)"/>
<path d="M26,18 L20,33 a3.2,3.2 0 0 0 6,2.4 L32,20.5 a3.9,3.9 0 0 0 -7.3,-2.8 L19,32" stroke="#28b8e8" stroke-width="1.5" transform="translate(0.5,2)"/>
</g></svg></div></div>
<div class="abs btn" style="left:918px;top:132.1px;width:50px;height:49.6px"><div class="abs" style="left:-1px;top:-1px"><svg width="50" height="50" viewBox="0 0 50 50">
<path d="M15.5,8.5 H31.5 L36.5,35.5 H10.5 Z" fill="url(#pap)" stroke="#b4b4b4" stroke-width="0.5"/>
<text x="24.5" y="29.5" text-anchor="middle" font-family="Liberation Serif,serif" font-weight="bold" font-style="italic" font-size="30" fill="#38b010">i</text>
<rect x="21.5" y="28" width="18.5" height="10.8" fill="#b8dc98" stroke="#88b868" stroke-width="0.6"/>
<text x="30.8" y="37.5" text-anchor="middle" font-family="Liberation Serif,serif" font-weight="bold" font-style="italic" font-size="12" fill="#182818">$</text>
</svg></div></div>
<div class="abs btn" style="left:970px;top:132.1px;width:50px;height:49.6px"><div class="abs" style="left:-1px;top:-1px"><svg width="50" height="50" viewBox="0 0 50 50">
<defs><radialGradient id="cmb" cx="0.4" cy="0.35" r="0.7"><stop offset="0" stop-color="#ffffff"/><stop offset="0.7" stop-color="#f0f0f0"/><stop offset="1" stop-color="#b8b8b8"/></radialGradient></defs>
<ellipse cx="24.5" cy="36.5" rx="7.5" ry="3.6" fill="#38c818" stroke="#289010" stroke-width="0.6"/>
<ellipse cx="24.5" cy="34.3" rx="6.5" ry="2.6" fill="#58e030"/>
<circle cx="25" cy="23.5" r="11.6" fill="url(#cmb)" stroke="#a8a8a8" stroke-width="0.5"/>
<ellipse cx="24.5" cy="13.5" rx="5" ry="2.6" fill="#50d820" stroke="#309810" stroke-width="0.5"/>
<circle cx="27.3" cy="25.2" r="6.2" fill="#48c820" stroke="#2f9a14" stroke-width="0.8"/>
<circle cx="27.6" cy="25.4" r="4" fill="#3a3a3a"/><circle cx="27.8" cy="25.6" r="2.5" fill="#0a0a0a"/>
<circle cx="19.3" cy="19.5" r="1.4" fill="#2890f0"/>
</svg></div></div>
<div class="abs btn" style="left:1022px;top:132.1px;width:50.3px;height:49.6px"><div class="abs" style="left:-1px;top:-1px"><svg width="50" height="50" viewBox="0.9 0.6 48.2 48.2">
<defs><linearGradient id="pdg" x1="0" y1="0" x2="1" y2="1"><stop offset="0" stop-color="#f6f6f6"/><stop offset="0.6" stop-color="#d0d0d0"/><stop offset="1" stop-color="#909090"/></linearGradient></defs>
<path d="M4.5,23.5 Q3,27.5 7,30 L18,35.5 Q22,37 26,35 L45,24 Q48.5,21.5 46,18.5 L39,14 Q36,12.6 32,13.6 L8,21 Q5.2,22 4.5,23.5 Z" fill="url(#pdg)" stroke="#8a8a8a" stroke-width="0.7"/>
<path d="M10,23.5 L33,16 L41,20 L21,30 Z" fill="#c8c8c8" stroke="#a0a0a0" stroke-width="0.4"/>
<path d="M13.5,24.5 L31,18.3 L37,21.3 L21,29 Z" fill="#f4f4f4"/>
<path d="M34,15.8 L38.5,14.8 L43.5,18.2 L40.5,19.6 Z" fill="#f8f8f8"/>
<path d="M24,30.5 L33,26 L35,27 L26,31.6 Z" fill="#ececec"/>
</svg></div></div>
<div class="abs btn" style="left:866px;top:190.1px;width:50px;height:54.6px"><div class="abs" style="left:-1px;top:-1px"><svg width="50" height="56" viewBox="0 0 50 56">
<defs><linearGradient id="rail" x1="0" y1="0" x2="0" y2="1"><stop offset="0" stop-color="#9a9a9a"/><stop offset="1" stop-color="#c8c8c8"/></linearGradient></defs>
<path d="M12,6 H38.5 L45,43 Q45.5,46.5 42,46.5 H7.5 Q3.6,46.5 4.2,43 Z" fill="url(#rail)" stroke="#808890" stroke-width="0.5"/>
<path d="M3.8,42 L11,42 L11.5,46.5 H7 Q3.2,46.5 3.8,42 Z M39.5,42 L45,42 Q45.8,46.5 42,46.5 H40 Z" fill="#f4f4f4"/>
<path d="M12.3,6 h3 l-0.6,3 h-3Z M35.4,6 h3.1 l0.6,3 h-3Z" fill="#e4e4e4"/>
<path d="M14.8,8.3 H35.8 L40.8,41 H9.2 Z" fill="#3e4240"/>
<path d="M9.6,38.5 L40.4,38.5 L40.8,41.3 L39,44.6 H11 L9.2,41.3Z" fill="#555a58" opacity="0.9"/>
<circle cx="27" cy="11" r="2.1" fill="#fff"/><circle cx="19.8" cy="14.6" r="1.7" fill="#8e8e8e"/>
<circle cx="14.8" cy="28.5" r="2.4" fill="#222" stroke="#111" stroke-width="0.4"/><circle cx="14.4" cy="27.8" r="0.9" fill="#555"/>
<circle cx="27.6" cy="33.8" r="0.9" fill="#ddd"/>
<circle cx="10.8" cy="38.8" r="1.6" fill="#0a0a0a"/><circle cx="39" cy="38.6" r="1.6" fill="#0a0a0a"/><circle cx="13.2" cy="20.4" r="1.1" fill="#0a0a0a"/><circle cx="36.5" cy="20.2" r="1.1" fill="#0a0a0a"/>
<path d="M27.8,15.2 L37.3,50.2" stroke="#0c0c0c" stroke-width="1.5"/>
</svg></div></div>
<div class="abs btn" style="left:918px;top:190.1px;width:50px;height:54.6px"><div class="abs" style="left:-1px;top:-1px"><svg width="50" height="56" viewBox="0 0 50 56">
<path d="M11,6 H37.5 L44,43 Q44.5,46.5 41,46.5 H6.5 Q2.6,46.5 3.2,43 Z" fill="url(#rail)" stroke="#808890" stroke-width="0.5"/>
<path d="M2.8,42 L10,42 L10.5,46.5 H6 Q2.2,46.5 2.8,42 Z" fill="#f4f4f4"/>
<path d="M11.3,6 h3 l-0.6,3 h-3Z M34.4,6 h3.1 l0.6,3 h-3Z" fill="#e4e4e4"/>
<path d="M13.8,8.3 H34.8 L39.8,41 H8.2 Z" fill="#3e4240"/>
<circle cx="9.8" cy="38.8" r="1.6" fill="#0a0a0a"/><circle cx="12.2" cy="20.4" r="1.1" fill="#0a0a0a"/><circle cx="35.5" cy="20.2" r="1.1" fill="#0a0a0a"/>
<path d="M24.6,23 H39.8 L47.4,36.2 L39.8,49.4 H24.6 L17,36.2 Z" fill="#444846" stroke="#fff" stroke-width="2.2" stroke-linejoin="miter"/>
<text x="0" y="0" text-anchor="middle" font-family="Liberation Sans,sans-serif" font-weight="bold" font-size="26" fill="#fff" stroke="#fff" stroke-width="0.6" transform="translate(32,43.6) scale(1.16,1)">x</text>
</svg></div></div>
<div class="abs btn" style="left:970px;top:190.1px;width:102.3px;height:54.6px"><div class="abs" style="left:-1px;top:-1px"><svg width="102" height="56" viewBox="0 0 102 56">
<defs><linearGradient id="mny" x1="0" y1="0" x2="1" y2="1"><stop offset="0" stop-color="#70e848"/><stop offset="1" stop-color="#30b018"/></linearGradient></defs>
<path d="M9.3,24.5 L9.3,36.5 L39.5,42 L39.5,30 Z" fill="#2a9c14"/>
<path d="M39.5,30 L43.5,11 L43.5,22 L39.5,42 Z" fill="#1e7c0e"/>
<g stroke="#1a6c0c" stroke-width="0.8"><path d="M9.3,27.8 L39.5,33.3 M9.3,31 L39.5,36.5 M9.3,34 L39.5,39.5"/></g>
<g stroke="#7ae858" stroke-width="1.2"><path d="M9.3,26 L39.5,31.5 M9.3,29.3 L39.5,34.8 M9.3,32.5 L39.5,38 M9.3,35.6 L39.5,41"/></g>
<path d="M25.5,9.6 L43.5,11 L39.5,30 L9.3,24.5 Z" fill="url(#mny)" stroke="#22901a" stroke-width="0.6"/>
<text x="30" y="27" text-anchor="middle" font-family="Liberation Sans,sans-serif" font-size="21" fill="#0c4c0c" transform="rotate(7 30 20) skewX(-8)">$</text>
<path d="M73.5,26 h7.6 l-3.8,4 Z" fill="#0a0a0a"/>
</svg></div></div>
<div class="abs btn" style="left:866px;top:247.3px;width:50px;height:54.2px"><div class="abs" style="left:-1px;top:-1px"><svg width="50" height="12" viewBox="0 0 50 12"><ellipse cx="36.2" cy="6.6" rx="5" ry="1.6" fill="#f2f0ee" stroke="#b0a8a0" stroke-width="0.5"/></svg></div></div>
<div class="abs btn" style="left:918px;top:247.3px;width:50px;height:54.2px"><div class="abs" style="left:-1px;top:-1px"></div></div>
<div class="abs btn" style="left:970px;top:247.3px;width:50px;height:54.2px"><div class="abs" style="left:-1px;top:-1px"></div></div>
<div class="abs btn" style="left:1022px;top:247.3px;width:50.3px;height:54.2px"><div class="abs" style="left:-1px;top:-1px"><svg width="50" height="56" viewBox="0 0 50 56">
<defs><linearGradient id="cup" x1="0" y1="0" x2="1" y2="0"><stop offset="0" stop-color="#d8d8d8"/><stop offset="0.35" stop-color="#ffffff"/><stop offset="0.75" stop-color="#f0f0f0"/><stop offset="1" stop-color="#b0b0b0"/></linearGradient>
<radialGradient id="scr" cx="0.5" cy="0.4" r="0.7"><stop offset="0" stop-color="#d8d8d8"/><stop offset="0.7" stop-color="#ffffff"/><stop offset="1" stop-color="#c8c8c8"/></radialGradient></defs>
<ellipse cx="26.5" cy="35" rx="20" ry="9.3" fill="url(#scr)" stroke="#a4a4a4" stroke-width="0.6"/>
<path d="M12,19 Q4,16 4.5,22.5 Q5.5,28.5 16,30.5" fill="none" stroke="#e8e8e8" stroke-width="2.6"/>
<path d="M9.3,15.5 Q10,30 19.5,36.8 Q26,39.6 32.5,36.8 Q42,29 43.5,15.5 Z" fill="url(#cup)" stroke="#9c9c9c" stroke-width="0.5"/>
<ellipse cx="26.4" cy="15" rx="17.2" ry="6.6" fill="#fafafa" stroke="#b0b0b0" stroke-width="0.5"/>
<ellipse cx="26.4" cy="15.6" rx="15.2" ry="5.1" fill="#160808"/>
<path d="M26,17.5 L30.5,12 L33,13 L29,18.5Z" fill="#c8c0b0"/>
</svg></div></div>
<div class="abs rc" style="top:326.9px;height:17.4px;line-height:17.4px;font-size:14.5px;right:69.5px;color:#e2301a;font-weight:bold;letter-spacing:0.3px">ЗАКОНЧЕНА</div>
<div class="abs rc" style="top:381.2px;height:16.8px;line-height:16.8px;font-size:14px;right:87.0px;color:#f2f6fa;letter-spacing:0px">22:18</div>
<div class="abs rc" style="top:398.2px;height:16.8px;line-height:16.8px;font-size:14px;right:78.4px;color:#f2f6fa;letter-spacing:0px">23:48</div>
<div class="abs rc" style="top:415.8px;height:16.8px;line-height:16.8px;font-size:14px;right:104.2px;color:#f2f6fa;letter-spacing:0px">1:30</div>
<div class="abs rc" style="top:449.0px;height:16.8px;line-height:16.8px;font-size:14px;right:59.7px;color:#f2f6fa;letter-spacing:0px">========</div>
<div class="abs rc" style="top:466.4px;height:16.8px;line-height:16.8px;font-size:14px;right:60.0px;color:#f2f6fa;letter-spacing:0px">: 2,00</div>
<div class="abs rc" style="top:483.0px;height:16.8px;line-height:16.8px;font-size:14px;right:59.7px;color:#f2f6fa;letter-spacing:0px">========</div>
<div class="abs rc" style="top:502.0px;height:21.6px;line-height:21.6px;font-size:18px;right:52.4px;color:#f2f6fa;letter-spacing:0.1px">80,00</div>
<div class="abs rc" style="top:529.2px;height:21.1px;line-height:21.1px;font-size:17.6px;right:52.0px;color:#f2f6fa;font-weight:bold;letter-spacing:0.25px">ОПЛАЧЕНО</div>
<div class="abs" id="sbar"></div>
<div class="abs" style="left:0;top:0;width:862px;height:869px;overflow:hidden">
<div class="abs sp" style="left:52.3px;width:335.9px"></div>
<div class="abs sp" style="left:390.4px;width:54.0px"></div>
<div class="abs sp" style="left:446.6px;width:152.2px">Иванов А.Б (пароль 1111)</div>
<div class="abs sp" style="left:601.6px;width:152.4px">Бильярд Американка</div>
<div class="abs sp" style="left:756.6px;width:113.4px"></div>
</div>
<div class="abs" style="left:780px;top:797.9px;width:115px;height:18px;color:#fff;font-weight:bold;font-size:11px;line-height:19.2px;text-align:center;white-space:nowrap;letter-spacing:-0.19px">20.10.2014 23:56:23</div>
<div class="abs" id="dlg"></div>
<div class="abs" id="dcont"></div>
<svg class="abs" style="left:252px;top:261px" width="17" height="17" viewBox="0 0 17 17">
<path d="M2.2,1.6 H11.4 L13.4,14.4 H0.9 Z" fill="#f2f2ee" stroke="#6a7a8a" stroke-width="0.7"/>
<path d="M2.2,1.7 H11.4" stroke="#3c6c8c" stroke-width="1.1"/>
<path d="M1,14.4 H13.4" stroke="#6a5a3a" stroke-width="1"/>
<path d="M5.2,3.2 L2.8,12.6" stroke="#20a018" stroke-width="1.7" stroke-dasharray="1.3 0.8"/>
<path d="M6.2,3.6 h4.4" stroke="#58b0d8" stroke-width="1"/>
<path d="M15.3,1.2 L16.1,2.3 L7.4,10.6 L6,10.9 L6.4,9.5 Z" fill="#18a818" stroke="#146414" stroke-width="0.5"/>
<path d="M6.4,9.5 L7.4,10.6 L5.8,11.2 Z" fill="#e08820"/>
<path d="M15.3,1.2 L16.1,2.3 L15,3.3 L14.2,2.2 Z" fill="#b8a8a0"/></svg>
<div class="abs" id="dtitle">Состояние столы</div>
<div class="abs" id="dclose"><svg width="31" height="20" viewBox="0 0 31 20"><path d="M12.5,7 L19.5,14 M19.5,7 L12.5,14" stroke="#fff" stroke-width="1.7"/></svg></div>
<div class="abs btn" style="left:252.4px;top:286.6px;width:124.2px;height:47.2px"><div class="abs" style="left:-1px;top:-1px"><svg width="124" height="47" viewBox="0 0 124 47">
<g fill="#98ee10" stroke="#34a010" stroke-width="1" stroke-linejoin="miter">
<path d="M62,9.8 L77,20.6 V29 L62,18 L47,29 V20.6 Z"/>
<path d="M62,22.2 L70.8,28.5 V33.2 L62,27 L53.2,33.2 V28.5 Z"/>
<path d="M62,30 L66.8,34 V36.2 L62,32.4 L57.2,36.2 V34 Z"/>
</g><path d="M49,23 L61.5,13.6" stroke="#d8ffa0" stroke-width="1.6" opacity="0.8"/></svg></div></div>
<div class="abs btn" style="left:378.3px;top:286.6px;width:124.2px;height:47.2px"><div class="abs" style="left:-1px;top:-1px"><svg width="124" height="47" viewBox="0 0 124 47">
<g fill="#98ee10" stroke="#34a010" stroke-width="1" stroke-linejoin="miter">
<path d="M62,38.2 L76.8,28 V19 L62,30 L47.2,19 V28 Z"/>
<path d="M62,25.8 L71,19.3 V14.8 L62,20.8 L53,14.8 V19.3 Z"/>
<path d="M62,18 L66.9,14.2 V11.6 L62,15 L57.1,11.6 V14.2 Z"/>
</g><path d="M50,27.6 L61,35" stroke="#e4ffb8" stroke-width="1.6" opacity="0.85"/></svg></div></div>
<div class="abs btn" style="left:504.2px;top:286.6px;width:124.2px;height:47.2px"><div class="abs" style="left:-1px;top:-1px"><svg width="124" height="47" viewBox="0 0 124 47">
<path d="M51.7,11.6 H68.5 L73.2,37 H47 Z" fill="url(#pap)" stroke="#a8a8a8" stroke-width="0.5"/>
<g font-family="Liberation Sans,sans-serif" font-weight="bold" fill="#1a90c8" text-anchor="middle">
<text x="56.6" y="19.5" font-size="8">A</text><text x="56" y="27.6" font-size="9">B</text><text x="55.3" y="36" font-size="10">C</text></g>
<g fill="#20bcec" stroke="#10609c" stroke-width="0.9">
<path d="M62.6,12.6 L68.9,17.2 L75.2,12.6 V17.0 L68.9,21.6 L62.6,17.0 Z"/><path d="M62.2,19.4 L68.8,24.2 L75.4,19.4 V24.0 L68.8,28.799999999999997 L62.2,24.0 Z"/><path d="M61.8,26.4 L68.7,31.4 L75.6,26.4 V31.2 L68.7,36.199999999999996 L61.8,31.2 Z"/></g>
</svg></div></div>
<div class="abs btn" style="left:630.4px;top:286.6px;width:124.2px;height:47.2px"><div class="abs" style="left:-1px;top:-1px"><svg width="124" height="47" viewBox="0 0 124 47">
<path d="M51.7,11.6 H68.5 L73.2,37 H47 Z" fill="url(#pap)" stroke="#a8a8a8" stroke-width="0.5"/>
<g font-family="Liberation Serif,serif" font-weight="bold" font-style="italic" fill="#0c0c0c" text-anchor="middle">
<text x="57" y="19.6" font-size="9">1</text><text x="56.5" y="27.6" font-size="10">2</text><text x="54.8" y="36.4" font-size="12">3</text></g>
<g fill="#68e010" stroke="#2c9410" stroke-width="0.9">
<path d="M63.4,12.6 L69.7,17.2 L76.0,12.6 V17.0 L69.7,21.6 L63.4,17.0 Z"/><path d="M63,19.4 L69.6,24.2 L76.2,19.4 V24.0 L69.6,28.799999999999997 L63,24.0 Z"/><path d="M62.6,26.4 L69.5,31.4 L76.4,26.4 V31.2 L69.5,36.199999999999996 L62.6,31.2 Z"/></g>
</svg></div></div>
<div class="abs btn" style="left:756.5px;top:286.6px;width:124.2px;height:47.2px"><div class="abs" style="left:-1px;top:-1px"><svg width="124" height="47" viewBox="0 0 124 47">
<g fill="#08e008" stroke="#128c12" stroke-width="0.9" stroke-linejoin="round">
<path d="M67.6,13.4 Q62,11.2 58,13 Q53,16 52,22.6 L47.3,22.8 L54.1,31.2 L61.2,22.8 L57.3,22.6 Q58.4,17.6 62,15.2 Q64.4,13.8 67.6,13.4 Z"/>
<path d="M56.2,34.5 Q61,36.4 66,33.8 Q71.4,30.6 72.6,24.9 L76.2,24.5 L69.8,16.3 L62.6,24.5 L67.3,24.9 Q66.8,29.4 62.6,32.4 Q59.6,34.4 56.2,34.5 Z"/>
</g></svg></div></div>
<div class="abs btn" style="left:882.4px;top:286.6px;width:124.2px;height:47.2px"><div class="abs" style="left:-1px;top:-1px"><div class="abs" style="left:48.6px;top:10.4px"><svg width="50" height="50" viewBox="0 0 50 50">
<defs><linearGradient id="xbb" x1="0" y1="0" x2="0" y2="1"><stop offset="0" stop-color="#c4d6e6"/><stop offset="0.42" stop-color="#8eb2d4"/><stop offset="0.5" stop-color="#3f7ebc"/><stop offset="1" stop-color="#4d92d0"/></linearGradient></defs>
<rect x="0" y="0" width="27.6" height="29.6" rx="5" fill="url(#xbb)" stroke="#2c5c96" stroke-width="1"/>
<text x="13.9" y="24.6" text-anchor="middle" font-family="Liberation Sans,sans-serif" font-weight="bold" font-size="25.5" fill="#86e40a" stroke="#5cac04" stroke-width="0.7">X</text>
</svg></div></div></div>
<div class="abs" id="gridbox">
<div class="hc " style="left:0.3px;width:19.8px"></div>
<div class="hc " style="left:20.7px;width:128.2px">Объект</div>
<div class="hc " style="left:149.5px;width:119.8px">Салон</div>
<div class="hc " style="left:269.9px;width:20.2px"></div>
<div class="hc " style="left:290.7px;width:132.2px"></div>
<div class="hc c" style="left:423.5px;width:100.5px">С</div>
<div class="hc c" style="left:524.6px;width:105.4px">До</div>
<div class="hc c" style="left:630.6px;width:75.4px">Ост. время</div>
<div class="hc " style="left:706.6px;width:53.1px">Брон.</div>
<div class="row" style="top:20.8px;background:#ffffff">
<div class="rh"></div>
<div class="cell " style="left:20.4px;width:128.8px;color:#000;border-color:#8a8a8a;letter-spacing:0.45px">Стол 2</div>
<div class="cell " style="left:149.2px;width:120.4px;color:#000;border-color:#8a8a8a;letter-spacing:0.33px">Салон 2</div>
<div class="cell" style="left:269.6px;width:20.8px;color:#000;border-color:#8a8a8a;letter-spacing:0px;background:#ff0000;box-shadow:inset 1.2px 0 0 #ffffff"></div>
<div class="cell " style="left:290.4px;width:132.8px;color:#000;border-color:#8a8a8a;letter-spacing:0.03px">Занят</div>
<div class="cell c" style="left:423.2px;width:101.1px;color:#000;border-color:#8a8a8a;letter-spacing:0.42px">22:17 - 20.10</div>
<div class="cell c" style="left:524.3px;width:106.0px;color:#000;border-color:#8a8a8a;letter-spacing:0.02px">Неограниченно</div>
<div class="cell c" style="left:630.3px;width:76.0px;color:#000;border-color:#8a8a8a;letter-spacing:0px">NA</div>
<div class="cell " style="left:706.3px;width:53.7px;color:#000;border-color:#8a8a8a;letter-spacing:0px"></div>
</div>
<div class="row" style="top:40.8px;background:#dde6ed">
<div class="rh"></div>
<div class="cell " style="left:20.4px;width:128.8px;color:#000;border-color:#8a8a8a;letter-spacing:0.45px">Стол 3</div>
<div class="cell " style="left:149.2px;width:120.4px;color:#000;border-color:#8a8a8a;letter-spacing:0.33px">Салон 2</div>
<div class="cell" style="left:269.6px;width:20.8px;color:#000;border-color:#8a8a8a;letter-spacing:0px;background:#ff0000;box-shadow:inset 1.2px 0 0 #dde6ed"></div>
<div class="cell " style="left:290.4px;width:132.8px;color:#000;border-color:#8a8a8a;letter-spacing:0.03px">Занят</div>
<div class="cell c" style="left:423.2px;width:101.1px;color:#000;border-color:#8a8a8a;letter-spacing:0.42px">23:55 - 20.10</div>
<div class="cell c" style="left:524.3px;width:106.0px;color:#000;border-color:#8a8a8a;letter-spacing:0.42px">00:55 - 21.10</div>
<div class="cell c" style="left:630.3px;width:76.0px;color:#000;border-color:#8a8a8a;letter-spacing:0.42px">00:59</div>
<div class="cell " style="left:706.3px;width:53.7px;color:#000;border-color:#8a8a8a;letter-spacing:0px"></div>
</div>
<div class="row" style="top:60.8px;background:#ffffff">
<div class="rh"></div>
<div class="cell " style="left:20.4px;width:128.8px;color:#000;border-color:#8a8a8a;letter-spacing:0.45px">Стол 4</div>
<div class="cell " style="left:149.2px;width:120.4px;color:#000;border-color:#8a8a8a;letter-spacing:0.33px">Салон 2</div>
<div class="cell" style="left:269.6px;width:20.8px;color:#000;border-color:#8a8a8a;letter-spacing:0px;background:#00f000;box-shadow:inset 1.2px 0 0 #ffffff"></div>
<div class="cell " style="left:290.4px;width:132.8px;color:#000;border-color:#8a8a8a;letter-spacing:0.03px">Свободен</div>
<div class="cell c" style="left:423.2px;width:101.1px;color:#000;border-color:#8a8a8a;letter-spacing:0.42px"></div>
<div class="cell c" style="left:524.3px;width:106.0px;color:#000;border-color:#8a8a8a;letter-spacing:0.42px"></div>
<div class="cell c" style="left:630.3px;width:76.0px;color:#000;border-color:#8a8a8a;letter-spacing:0.42px">00:00</div>
<div class="cell " style="left:706.3px;width:53.7px;color:#000;border-color:#8a8a8a;letter-spacing:0px"></div>
</div>
<div class="row" style="top:80.8px;background:#dde6ed">
<div class="rh"></div>
<div class="cell " style="left:20.4px;width:128.8px;color:#000;border-color:#8a8a8a;letter-spacing:0.45px">Стол 1</div>
<div class="cell " style="left:149.2px;width:120.4px;color:#000;border-color:#8a8a8a;letter-spacing:0.33px">Салон 2</div>
<div class="cell" style="left:269.6px;width:20.8px;color:#000;border-color:#8a8a8a;letter-spacing:0px;background:#ffff00;box-shadow:inset 1.2px 0 0 #dde6ed"></div>
<div class="cell " style="left:290.4px;width:132.8px;color:#000;border-color:#8a8a8a;letter-spacing:0.03px">Игра не закончена</div>
<div class="cell c" style="left:423.2px;width:101.1px;color:#000;border-color:#8a8a8a;letter-spacing:0.42px">22:18 - 20.10</div>
<div class="cell c" style="left:524.3px;width:106.0px;color:#000;border-color:#8a8a8a;letter-spacing:0.42px">23:48 - 20.10</div>
<div class="cell c" style="left:630.3px;width:76.0px;color:#000;border-color:#8a8a8a;letter-spacing:0.42px">00:00</div>
<div class="cell " style="left:706.3px;width:53.7px;color:#000;border-color:#8a8a8a;letter-spacing:0px"></div>
</div>
<div class="row" style="top:100.8px;background:#ffffff">
<div class="rh"></div>
<div class="cell " style="left:20.4px;width:128.8px;color:#000;border-color:#8a8a8a;letter-spacing:0.45px">Стол 5</div>
<div class="cell " style="left:149.2px;width:120.4px;color:#000;border-color:#8a8a8a;letter-spacing:0.33px">Салон 2</div>
<div class="cell" style="left:269.6px;width:20.8px;color:#000;border-color:#8a8a8a;letter-spacing:0px;background:#00f000;box-shadow:inset 1.2px 0 0 #ffffff"></div>
<div class="cell " style="left:290.4px;width:132.8px;color:#000;border-color:#8a8a8a;letter-spacing:0.03px">Свободен</div>
<div class="cell c" style="left:423.2px;width:101.1px;color:#000;border-color:#8a8a8a;letter-spacing:0.42px"></div>
<div class="cell c" style="left:524.3px;width:106.0px;color:#000;border-color:#8a8a8a;letter-spacing:0.42px"></div>
<div class="cell c" style="left:630.3px;width:76.0px;color:#000;border-color:#8a8a8a;letter-spacing:0.42px">00:00</div>
<div class="cell " style="left:706.3px;width:53.7px;color:#000;border-color:#8a8a8a;letter-spacing:0px"></div>
</div>
<div class="row" style="top:120.8px;background:#dde6ed">
<div class="rh"></div>
<div class="cell " style="left:20.4px;width:128.8px;color:#000;border-color:#8a8a8a;letter-spacing:0.45px">Стол 6</div>
<div class="cell " style="left:149.2px;width:120.4px;color:#000;border-color:#8a8a8a;letter-spacing:0.33px">Салон 2</div>
<div class="cell" style="left:269.6px;width:20.8px;color:#000;border-color:#8a8a8a;letter-spacing:0px;background:#00f000;box-shadow:inset 1.2px 0 0 #dde6ed"></div>
<div class="cell " style="left:290.4px;width:132.8px;color:#000;border-color:#8a8a8a;letter-spacing:0.03px">Свободен</div>
<div class="cell c" style="left:423.2px;width:101.1px;color:#000;border-color:#8a8a8a;letter-spacing:0.42px"></div>
<div class="cell c" style="left:524.3px;width:106.0px;color:#000;border-color:#8a8a8a;letter-spacing:0.42px"></div>
<div class="cell c" style="left:630.3px;width:76.0px;color:#000;border-color:#8a8a8a;letter-spacing:0.42px">00:00</div>
<div class="cell " style="left:706.3px;width:53.7px;color:#000;border-color:#8a8a8a;letter-spacing:0px"></div>
</div>
<div class="row" style="top:140.8px;background:#3399ff">
<div class="rh" style="background:#8d5a3a;border-color:#2a1408"><svg width="18" height="18" viewBox="0 0 18 18" style="position:absolute;left:0;top:0"><path d="M6.4,2.8 L13.4,8.5 L6.4,14.2 Z" fill="#fff4c4"/></svg></div>
<div class="cell " style="left:20.4px;width:128.8px;color:#ffffff;border-color:#b07848;letter-spacing:0.45px;border-left:0;border-right:1px solid #8c7c70;border-top:1px dotted #c87c38;border-bottom:1px dotted #c87c38;line-height:18.4px">Стол 7</div>
<div class="cell " style="left:149.2px;width:120.4px;color:#ffffff;border-color:#b07848;letter-spacing:0.33px;border-left:0;border-right:1px solid #8c7c70;border-top:1px dotted #c87c38;border-bottom:1px dotted #c87c38;line-height:18.4px">Салон 2</div>
<div class="cell " style="left:269.6px;width:20.8px;color:#ffffff;border-color:#b07848;letter-spacing:0px;border-left:0;border-right:1px solid #8c7c70;border-top:1px dotted #c87c38;border-bottom:1px dotted #c87c38;line-height:18.4px"></div>
<div class="cell " style="left:290.4px;width:132.8px;color:#ffffff;border-color:#b07848;letter-spacing:0.03px;border-left:0;border-right:1px solid #8c7c70;border-top:1px dotted #c87c38;border-bottom:1px dotted #c87c38;line-height:18.4px">Свободен</div>
<div class="cell c" style="left:423.2px;width:101.1px;color:#ffffff;border-color:#b07848;letter-spacing:0.42px;border-left:0;border-right:1px solid #8c7c70;border-top:1px dotted #c87c38;border-bottom:1px dotted #c87c38;line-height:18.4px"></div>
<div class="cell c" style="left:524.3px;width:106.0px;color:#ffffff;border-color:#b07848;letter-spacing:0.42px;border-left:0;border-right:1px solid #8c7c70;border-top:1px dotted #c87c38;border-bottom:1px dotted #c87c38;line-height:18.4px"></div>
<div class="cell c" style="left:630.3px;width:76.0px;color:#ffffff;border-color:#b07848;letter-spacing:0.42px;border-left:0;border-right:1px solid #8c7c70;border-top:1px dotted #c87c38;border-bottom:1px dotted #c87c38;line-height:18.4px">00:00</div>
<div class="cell " style="left:706.3px;width:53.7px;color:#ffffff;border-color:#b07848;letter-spacing:0px;border-left:0;border-right:1px solid #8c7c70;border-top:1px dotted #c87c38;border-bottom:1px dotted #c87c38;line-height:18.4px"></div>
</div>
</div>
<div class="abs" style="left:990px;top:339px;width:15.6px;height:266.5px;background:#f6f6f4"></div>
<div class="abs" style="left:990px;top:339px;width:15.6px;height:17.4px;background:#f0f0f0;border:1px solid #fff;border-right-color:#7c7c7c;border-bottom-color:#7c7c7c"><svg width="14" height="16" viewBox="0 0 14 16" style="position:absolute;left:0;top:0"><path d="M3.4,9.4 h7.2 l-3.6,-4 Z" fill="#000"/></svg></div>
<div class="abs" style="left:990px;top:356.6px;width:15.6px;height:16px;background:#f0f0f0;border:1px solid #fff;border-right-color:#7c7c7c;border-bottom-color:#7c7c7c"></div>
<div class="abs" style="left:990px;top:588.2px;width:15.6px;height:17.3px;background:#f0f0f0;border:1px solid #fff;border-right-color:#7c7c7c;border-bottom-color:#7c7c7c"><svg width="14" height="16" viewBox="0 0 14 16" style="position:absolute;left:0;top:0"><path d="M3.4,6 h7.2 l-3.6,4 Z" fill="#000"/></svg></div>
</div></div>
</body></html>
